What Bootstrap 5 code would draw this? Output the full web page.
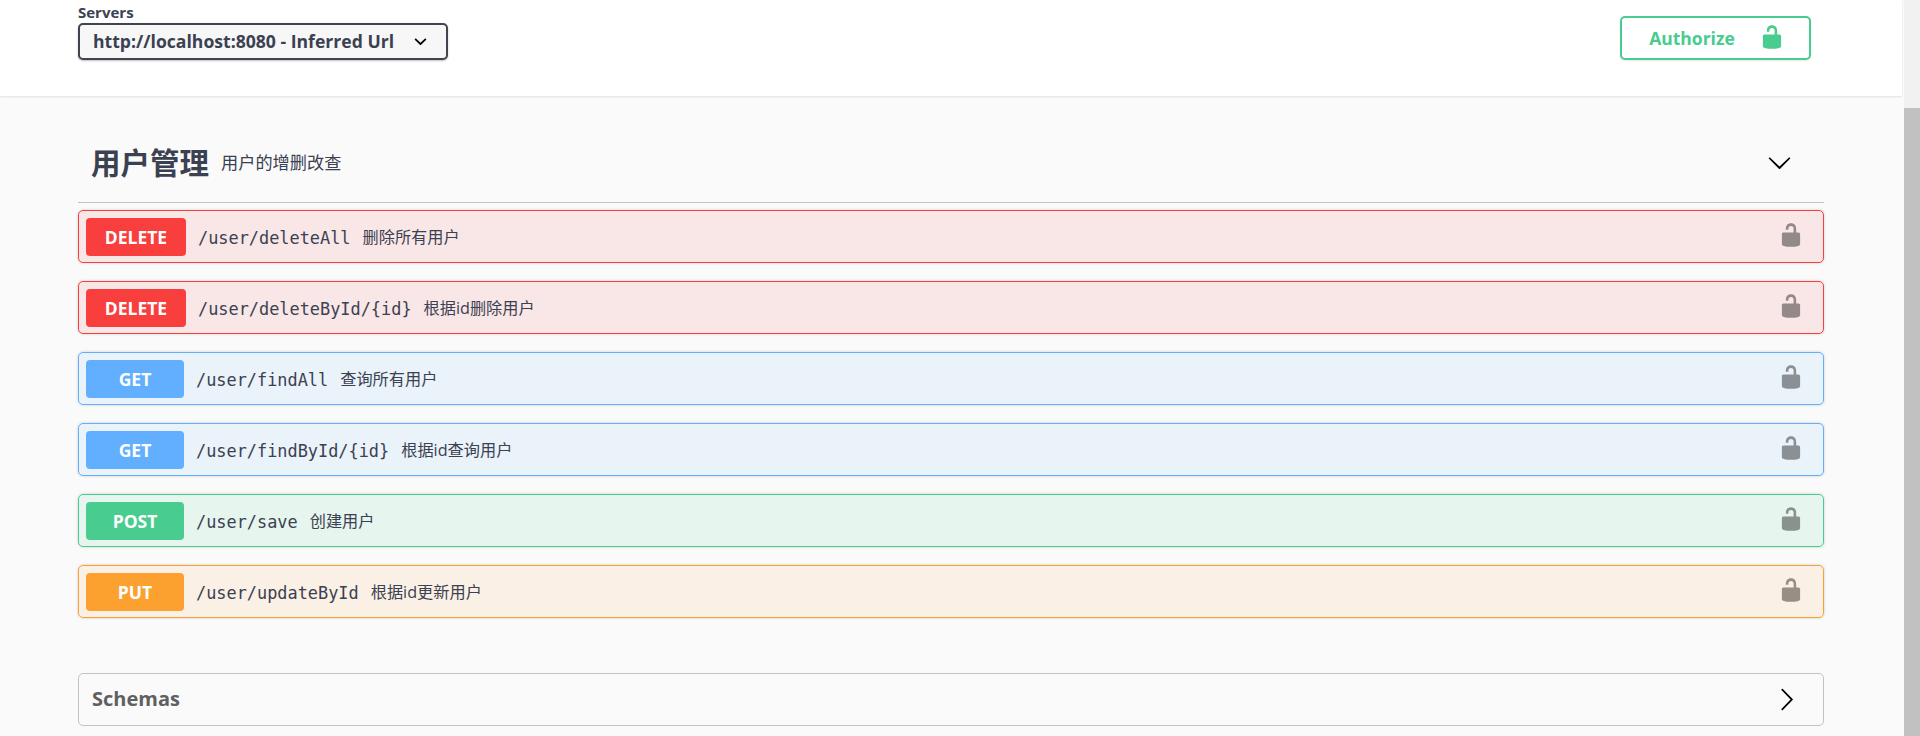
<!DOCTYPE html>
<html lang="en">
<head>
    <meta charset="UTF-8">
    <meta name="viewport" content="width=device-width, initial-scale=1.0">
    <title>Swagger UI</title>
    <link href="https://cdn.jsdelivr.net/npm/bootstrap@5.3.0/dist/css/bootstrap.min.css" rel="stylesheet">
    <style>
        html, body { height: 100%; overflow: hidden; }
        body { background-color: #fafafa; color: #3b4151; font-family: "Open Sans", "Noto Sans CJK SC", sans-serif; }
        .page-main { width: 1904px; flex: none; }
        .scroll-track { width: 16px; flex: none; background-color: #f1f1f1; padding-top: 108px; }
        .scroll-thumb { height: 100%; background-color: #c1c1c1; }
        .top-wrap { height: 96px; background-color: #fff; box-shadow: 0 1px 2px rgba(0,0,0,.1); padding: 5px 91px 0 78px; margin-right: 2px; position: relative; }
        .servers-label { font-size: 15px; font-weight: 700; line-height: 15px; margin-bottom: 3px; }
        .server-select {
            width: 370px; height: 37px; padding: 0 0 0 13px; font-size: 17.6px; font-weight: 700; color: #3b4151;
            background-color: #f7f7f7; border: 2px solid #41444e; border-radius: 5px; box-shadow: 0 1px 2px rgba(0,0,0,.25);
            font-family: "Open Sans", "Noto Sans CJK SC", sans-serif;
            background-image: url("data:image/svg+xml,%3Csvg xmlns='http://www.w3.org/2000/svg' viewBox='0 0 20 20'%3E%3Cpath d='M13.418 7.859a.695.695 0 0 1 .978 0 .68.68 0 0 1 0 .969l-3.908 3.83a.697.697 0 0 1-.979 0l-3.908-3.83a.68.68 0 0 1 0-.969.695.695 0 0 1 .978 0L10 11l3.418-3.141z'/%3E%3C/svg%3E");
            background-repeat: no-repeat; background-position: right 13px center; background-size: 25px;
        }
        .auth-btn {
            width: 191px; height: 44px; margin-top: 11px; padding: 0 0 0 3px; gap: 24px; color: #49cc90; background: #fff; font-size: 17.5px; font-weight: 700;
            border: 2px solid #49cc90; border-radius: 5px; box-shadow: 0 1px 2px rgba(0,0,0,.1);
        }
        .auth-btn svg { fill: #49cc90; margin-bottom: 2px; }
        .section-wrap { padding: 0 80px 0 78px; }
        .tag-head { height: 107px; padding: 27px 0 0 13px; border-bottom: 1px solid rgba(59,65,81,.3); margin-bottom: 7px; }
        .tag-title { font-size: 29.5px; font-weight: 700; line-height: 38px; margin: 0; }
        .tag-desc { font-size: 17.2px; margin-left: 12px; }
        .tag-arrow { margin-right: 32px; }
        .op-row { height: 52.5px; margin-bottom: 18.5px; padding: 1px 7px 0; border: 1px solid; border-radius: 5px; box-shadow: 0 0 3px rgba(0,0,0,.19); }
        .op-delete { border-color: #f93e3e; background-color: rgba(249,62,62,.1); }
        .op-get { border-color: #61affe; background-color: rgba(97,175,254,.1); }
        .op-post { border-color: #49cc90; background-color: rgba(73,204,144,.1); }
        .op-put { border-color: #fca130; background-color: rgba(252,161,48,.1); }
        .verb { width: 98px; height: 38px; flex: none; border-radius: 4px; color: #fff; font-size: 17.5px; font-weight: 700; }
        .op-delete .verb { background-color: #f93e3e; width: 100px; }
        .op-get .verb { background-color: #61affe; }
        .op-post .verb { background-color: #49cc90; }
        .op-put .verb { background-color: #fca130; }
        .op-path { font-family: "DejaVu Sans Mono", "Liberation Mono", monospace; font-size: 16.9px; margin: 3px 0 0 12px; }
        .op-summary { font-size: 16.2px; margin-left: 12px; }
        .op-lock { fill: #000; opacity: .4; margin: 0 12px 3px 0; }
        .schema-box { height: 53px; margin-top: 55px; padding: 0 24px 0 13px; border: 1px solid rgba(59,65,81,.3); border-radius: 5px; font-size: 20px; font-weight: 700; color: #606060; }
    </style>
</head>
<body class="d-flex">
    <svg width="0" height="0" class="position-absolute">
        <symbol id="unlocked" viewBox="0 0 20 20"><path d="M15.8 8H14V5.6C14 2.703 12.665 1 10 1 7.334 1 6 2.703 6 5.6V6h2v-.801C8 3.754 8.797 3 10 3c1.203 0 2 .754 2 2.199V8H4c-.553 0-1 .646-1 1.199V17c0 .549.428 1.139.951 1.307l1.197.387C5.672 18.861 6.55 19 7.1 19h5.8c.549 0 1.428-.139 1.951-.307l1.196-.387c.524-.167.953-.757.953-1.306V9.199C17 8.646 16.352 8 15.8 8z"/></symbol>
    </svg>
    <div class="page-main">
        <div class="top-wrap d-flex justify-content-between align-items-start">
            <div>
                <div class="servers-label">Servers</div>
                <select class="form-select server-select">
                    <option>http://localhost:8080 - Inferred Url</option>
                </select>
            </div>
            <button type="button" class="btn auth-btn d-flex align-items-center justify-content-center">
                <span>Authorize</span>
                <svg width="26" height="26"><use href="#unlocked"/></svg>
            </button>
        </div>
        <div class="section-wrap">
            <div class="tag-head d-flex align-items-center">
                <h3 class="tag-title">用户管理</h3>
                <span class="tag-desc flex-grow-1">用户的增删改查</span>
                <svg class="tag-arrow" width="25" height="25" viewBox="0 0 20 20"><path d="M17.418 6.109c.272-.268.709-.268.979 0s.271.701 0 .969l-7.908 7.83c-.27.268-.707.268-.979 0l-7.908-7.83c-.27-.268-.27-.701 0-.969.271-.268.709-.268.979 0L10 13.25l7.418-7.141z"/></svg>
            </div>
            <div class="op-row op-delete d-flex align-items-center">
                <span class="verb d-flex align-items-center justify-content-center">DELETE</span>
                <span class="op-path">/user/deleteAll</span>
                <span class="op-summary flex-grow-1">删除所有用户</span>
                <svg class="op-lock" width="26" height="26"><use href="#unlocked"/></svg>
            </div>
            <div class="op-row op-delete d-flex align-items-center">
                <span class="verb d-flex align-items-center justify-content-center">DELETE</span>
                <span class="op-path">/user/deleteById/{id}</span>
                <span class="op-summary flex-grow-1">根据id删除用户</span>
                <svg class="op-lock" width="26" height="26"><use href="#unlocked"/></svg>
            </div>
            <div class="op-row op-get d-flex align-items-center">
                <span class="verb d-flex align-items-center justify-content-center">GET</span>
                <span class="op-path">/user/findAll</span>
                <span class="op-summary flex-grow-1">查询所有用户</span>
                <svg class="op-lock" width="26" height="26"><use href="#unlocked"/></svg>
            </div>
            <div class="op-row op-get d-flex align-items-center">
                <span class="verb d-flex align-items-center justify-content-center">GET</span>
                <span class="op-path">/user/findById/{id}</span>
                <span class="op-summary flex-grow-1">根据id查询用户</span>
                <svg class="op-lock" width="26" height="26"><use href="#unlocked"/></svg>
            </div>
            <div class="op-row op-post d-flex align-items-center">
                <span class="verb d-flex align-items-center justify-content-center">POST</span>
                <span class="op-path">/user/save</span>
                <span class="op-summary flex-grow-1">创建用户</span>
                <svg class="op-lock" width="26" height="26"><use href="#unlocked"/></svg>
            </div>
            <div class="op-row op-put d-flex align-items-center">
                <span class="verb d-flex align-items-center justify-content-center">PUT</span>
                <span class="op-path">/user/updateById</span>
                <span class="op-summary flex-grow-1">根据id更新用户</span>
                <svg class="op-lock" width="26" height="26"><use href="#unlocked"/></svg>
            </div>
            <div class="schema-box d-flex align-items-center justify-content-between">
                <span>Schemas</span>
                <svg width="25" height="25" viewBox="0 0 20 20"><path d="M13.25 10L6.109 2.58a.697.697 0 0 1 0-.979.68.68 0 0 1 .969 0l7.83 7.908a.697.697 0 0 1 0 .979l-7.83 7.908a.68.68 0 0 1-.969 0 .697.697 0 0 1 0-.979L13.25 10z"/></svg>
            </div>
        </div>
    </div>
    <div class="scroll-track"><div class="scroll-thumb"></div></div>
    <script src="https://cdn.jsdelivr.net/npm/bootstrap@5.3.0/dist/js/bootstrap.bundle.min.js"></script>
</body>
</html>
